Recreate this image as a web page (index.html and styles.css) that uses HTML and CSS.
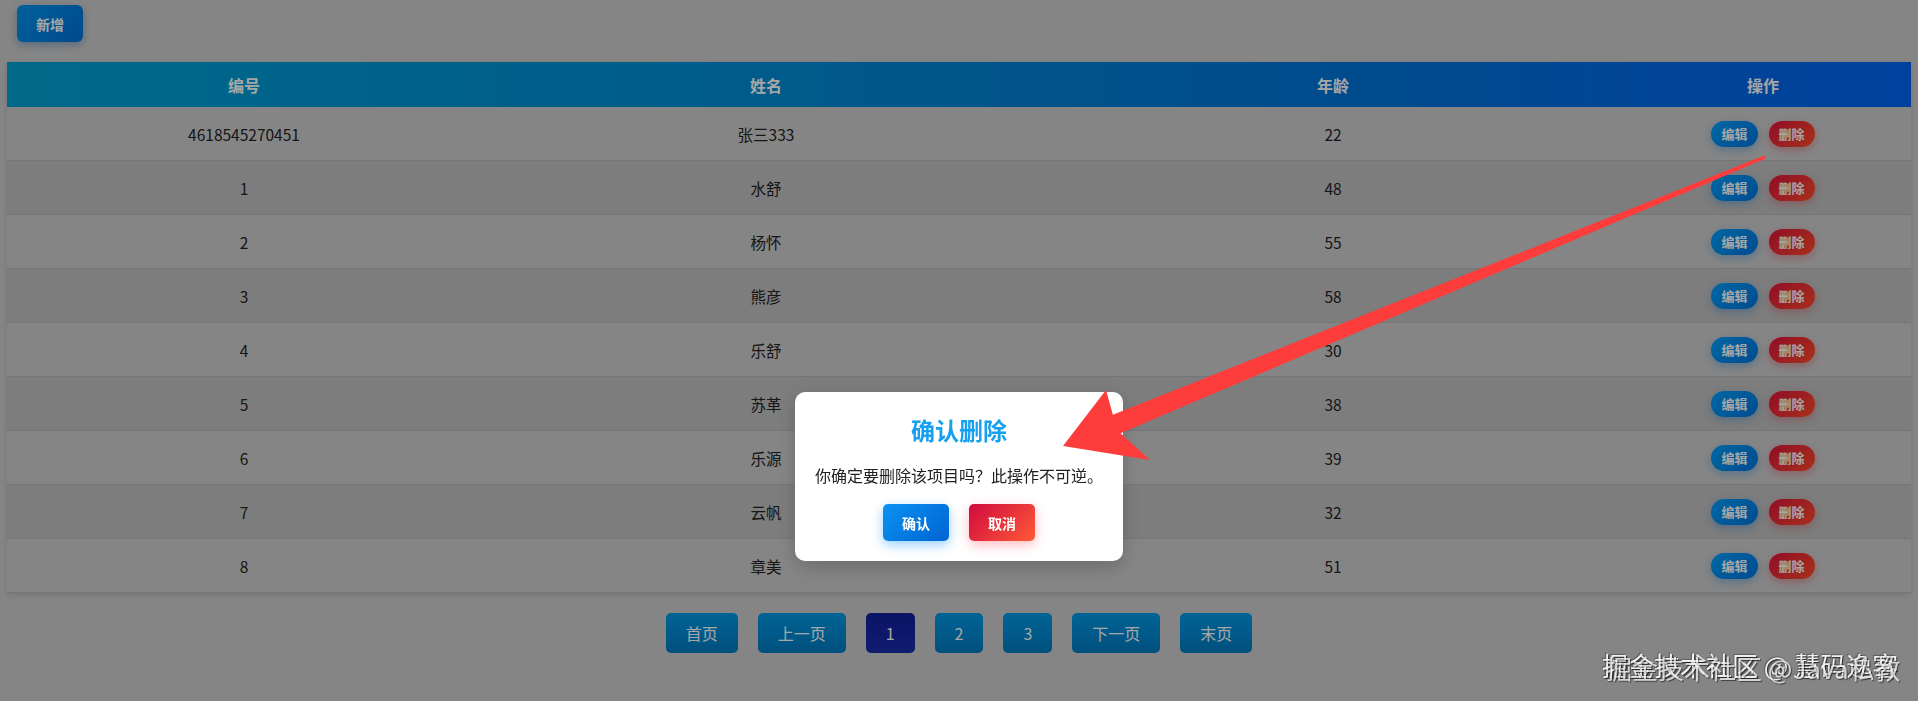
FILE: index.html
```html
<!DOCTYPE html>
<html lang="zh-CN">
<head>
    <meta charset="UTF-8">
    <meta name="viewport" content="width=device-width, initial-scale=1.0">
    <title>用户列表</title>
    <link rel="stylesheet" href="styles.css">
</head>
<body>
    <div class="container">
        <button class="add-btn">新增</button>

        <table class="data-table">
            <colgroup>
                <col class="col-id">
                <col class="col-name">
                <col class="col-age">
                <col class="col-op">
            </colgroup>
            <thead>
                <tr>
                    <th>编号</th>
                    <th>姓名</th>
                    <th>年龄</th>
                    <th>操作</th>
                </tr>
            </thead>
            <tbody>
                <tr><td>4618545270451</td><td>张三333</td><td>22</td><td><span class="ops"><button class="btn-edit">编辑</button><button class="btn-del">删除</button></span></td></tr>
                <tr><td>1</td><td>水舒</td><td>48</td><td><span class="ops"><button class="btn-edit">编辑</button><button class="btn-del">删除</button></span></td></tr>
                <tr><td>2</td><td>杨怀</td><td>55</td><td><span class="ops"><button class="btn-edit">编辑</button><button class="btn-del">删除</button></span></td></tr>
                <tr><td>3</td><td>熊彦</td><td>58</td><td><span class="ops"><button class="btn-edit">编辑</button><button class="btn-del">删除</button></span></td></tr>
                <tr><td>4</td><td>乐舒</td><td>30</td><td><span class="ops"><button class="btn-edit">编辑</button><button class="btn-del">删除</button></span></td></tr>
                <tr><td>5</td><td>苏革</td><td>38</td><td><span class="ops"><button class="btn-edit">编辑</button><button class="btn-del">删除</button></span></td></tr>
                <tr><td>6</td><td>乐源</td><td>39</td><td><span class="ops"><button class="btn-edit">编辑</button><button class="btn-del">删除</button></span></td></tr>
                <tr><td>7</td><td>云帆</td><td>32</td><td><span class="ops"><button class="btn-edit">编辑</button><button class="btn-del">删除</button></span></td></tr>
                <tr><td>8</td><td>章美</td><td>51</td><td><span class="ops"><button class="btn-edit">编辑</button><button class="btn-del">删除</button></span></td></tr>
            </tbody>
        </table>

        <div class="pagination">
            <button>首页</button>
            <button>上一页</button>
            <button class="active">1</button>
            <button>2</button>
            <button>3</button>
            <button>下一页</button>
            <button>末页</button>
        </div>
    </div>

    <!-- 删除确认弹窗 -->
    <div class="modal-mask">
        <div class="modal">
            <h3>确认删除</h3>
            <p>你确定要删除该项目吗？此操作不可逆。</p>
            <div class="modal-actions">
                <button class="btn-ok">确认</button>
                <button class="btn-cancel">取消</button>
            </div>
        </div>
    </div>

    <svg class="arrow" viewBox="0 0 1918 701" width="1918" height="701">
        <polygon points="1063,446 1150,460 1120.5,433.2 1765.6,158.4 1764.4,155.6 1112.9,414.7 1106,390" fill="#fd3c3c"/>
    </svg>

    <div class="watermark">
        <span class="wm-a">掘金技术社区 @ 慧码逸客</span>
        <span class="wm-b">掘金技术社区 @Java私教</span>
    </div>
</body>
</html>
```

FILE: styles.css
```css
body {
    margin: 0;
    font-family: "Noto Sans CJK SC", "Noto Sans", sans-serif;
    background-color: #cdcdcd;
    color: #222;
}

.container {
    padding: 5px 7px;
}

button {
    font-family: inherit;
    border: none;
    cursor: pointer;
}

.add-btn {
    display: block;
    margin-left: 10px;
    height: 37px;
    padding: 0 19px;
    border-radius: 6px;
    background: linear-gradient(135deg, #0096ee, #0070d6);
    color: #fff;
    font-size: 14px;
    font-weight: bold;
    box-shadow: 0 3px 8px rgba(0, 80, 160, 0.35);
}

.data-table {
    width: 100%;
    margin-top: 20px;
    border-collapse: collapse;
    table-layout: fixed;
    text-align: center;
    box-shadow: 0 2px 6px rgba(0, 0, 0, 0.12);
}

.col-id { width: 474px; }
.col-name { width: 570px; }
.col-age { width: 564px; }
.col-op { width: 296px; }

.data-table thead tr {
    background: linear-gradient(90deg, #00a2d4 0%, #008cd4 40%, #0074d8 70%, #0064f2 100%);
}

.data-table th {
    height: 45px;
    padding: 0;
    color: #fff;
    font-size: 16px;
    font-weight: bold;
}

.data-table td {
    height: 53px;
    padding: 0;
    font-size: 15.5px;
    border-bottom: 1px solid #b6b6b6;
}

.data-table tbody tr:nth-child(even) {
    background-color: #c0c0c0;
}

.ops {
    display: inline-flex;
    gap: 11px;
    vertical-align: middle;
}

.btn-edit,
.btn-del {
    height: 26px;
    padding: 0 10px;
    border-radius: 13px;
    color: #fff;
    font-size: 13px;
    font-weight: bold;
}

.btn-edit {
    background: linear-gradient(135deg, #00a0fa, #0074dc);
    box-shadow: 0 3px 8px rgba(0, 120, 220, 0.35);
}

.btn-del {
    background: linear-gradient(135deg, #e0143c, #ff4b2b);
    box-shadow: 0 3px 8px rgba(230, 40, 60, 0.35);
}

.pagination {
    display: flex;
    justify-content: center;
    gap: 20px;
    margin-top: 20px;
}

.pagination button {
    height: 40px;
    padding: 0 20px;
    border-radius: 5px;
    background: linear-gradient(180deg, #009ae6, #007bc0);
    color: #fff;
    font-size: 16px;
}

.pagination button.active {
    background: linear-gradient(180deg, #111f9c, #1a2cab);
}

.modal-mask {
    position: fixed;
    inset: 0;
    background: rgba(0, 0, 0, 0.35);
    display: flex;
    justify-content: center;
    align-items: flex-start;
    padding-top: 392px;
}

.modal {
    width: 328px;
    box-sizing: border-box;
    padding: 20px 16px;
    background: #fff;
    border-radius: 10px;
    text-align: center;
    box-shadow: 0 6px 20px rgba(0, 0, 0, 0.2);
}

.modal h3 {
    margin: 0;
    font-size: 24px;
    line-height: 36px;
    color: #17a0f0;
}

.modal p {
    margin: 15px 0 17px;
    font-size: 16px;
    line-height: 24px;
    color: #222;
}

.modal-actions {
    display: flex;
    justify-content: center;
    gap: 20px;
}

.btn-ok,
.btn-cancel {
    height: 37px;
    padding: 0 19px;
    border-radius: 5px;
    color: #fff;
    font-size: 14px;
    font-weight: bold;
}

.btn-ok {
    background: linear-gradient(135deg, #0a92f2, #0064d2);
    box-shadow: 0 4px 12px rgba(0, 140, 255, 0.4);
}

.btn-cancel {
    background: linear-gradient(135deg, #cf0a3f, #ff5a36);
    box-shadow: 0 4px 12px rgba(255, 60, 80, 0.35);
}

.arrow {
    position: fixed;
    left: 0;
    top: 0;
    pointer-events: none;
}

.watermark {
    position: fixed;
    right: 6px;
    bottom: 22px;
    width: 310px;
    height: 28px;
    font-size: 26px;
    line-height: 28px;
    color: #f2f2f2;
    pointer-events: none;
}

.watermark span {
    position: absolute;
    left: 0;
    top: 0;
    white-space: nowrap;
    text-shadow: 1px 1px 1px rgba(0, 0, 0, 0.7), -1px -1px 1px rgba(0, 0, 0, 0.3);
}

.watermark .wm-b {
    left: 4px;
    top: 3px;
    opacity: 0.75;
}
```
